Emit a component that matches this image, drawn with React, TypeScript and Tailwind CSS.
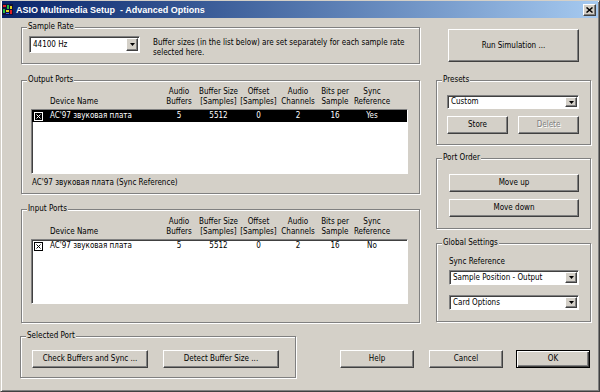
import type { ReactNode } from 'react'

// column widths for the port lists (audio buffers .. sync reference)
const COL_WIDTHS = ['w-[40px]', 'w-[39px]', 'w-[41px]', 'w-[38px]', 'w-[36px]', 'w-[38px]']

const HEADERS: [string, string][] = [
  ['Audio', 'Buffers'],
  ['Buffer Size', '[Samples]'],
  ['Offset', '[Samples]'],
  ['Audio', 'Channels'],
  ['Bits per', 'Sample'],
  ['Sync', 'Reference'],
]

type Port = {
  name: string
  values: string[]
}

const OUTPUT_PORTS: Port[] = [{ name: "AC'97 звуковая плата", values: ['5', '5512', '0', '2', '16', 'Yes'] }]
const INPUT_PORTS: Port[] = [{ name: "AC'97 звуковая плата", values: ['5', '5512', '0', '2', '16', 'No'] }]

const RAISED = 'border border-t-white border-l-white border-r-[#404040] border-b-[#404040] shadow-[inset_-1px_-1px_0_#808080]'
const SUNKEN = 'border border-t-[#808080] border-l-[#808080] border-r-white border-b-white shadow-[inset_1px_1px_0_#404040]'

function Group({ label, className, children }: { label: string; className: string; children?: ReactNode }) {
  return (
    <div className={`relative border border-[#808080] shadow-[inset_1px_1px_0_#fff,1px_1px_0_#fff] ${className}`}>
      <span className="absolute left-[5px] top-[-6px] bg-[#d4d0c8] px-[1px] leading-[10px]">{label}</span>
      {children}
    </div>
  )
}

function Button({ children, className, disabled, isDefault }: { children: ReactNode; className: string; disabled?: boolean; isDefault?: boolean }) {
  const frame = isDefault
    ? 'border border-black shadow-[inset_1px_1px_0_#fff,inset_-1px_-1px_0_#404040,inset_-2px_-2px_0_#808080]'
    : RAISED
  return (
    <div className={`flex items-center justify-center bg-[#d4d0c8] ${frame} ${className}`}>
      <span className={disabled ? 'text-[#808080] [text-shadow:1px_1px_0_#fff]' : ''}>{children}</span>
    </div>
  )
}

function Select({ value, className }: { value: string; className: string }) {
  return (
    <div className={`flex items-stretch bg-white p-[1px] ${SUNKEN} ${className}`}>
      <span className="flex flex-1 items-center pl-[2px] whitespace-nowrap">{value}</span>
      <span className={`flex w-[12px] items-center justify-center bg-[#d4d0c8] ${RAISED}`}>
        <svg width="5" height="3" viewBox="0 0 5 3">
          <path d="M0 0h5L2.5 3z" fill="#000" />
        </svg>
      </span>
    </div>
  )
}

function CheckMark() {
  return (
    <svg width="9" height="9" viewBox="0 0 9 9" className="shrink-0">
      <rect x="0.5" y="0.5" width="8" height="8" fill="none" stroke="currentColor" />
      <path d="M2.5 2.5l4 4M6.5 2.5l-4 4" stroke="currentColor" strokeWidth="1" />
    </svg>
  )
}

function PortList({ label, ports, selected, footer, className }: { label: string; ports: Port[]; selected?: boolean; footer?: string; className: string }) {
  return (
    <Group label={label} className={`h-[114px] pl-[9px] ${className}`}>
      {/* column headers */}
      <div className="flex items-end">
        <div className="w-[19px] shrink-0" />
        <div className="w-[109px] shrink-0">Device Name</div>
        {HEADERS.map((h, i) => (
          <div key={i} className={`${COL_WIDTHS[i]} shrink-0 text-center whitespace-nowrap`}>
            {h[0]}
            <br />
            {h[1]}
          </div>
        ))}
      </div>

      {/* list box */}
      <div className={`mt-[2px] h-[65px] w-[377px] bg-white ${SUNKEN}`}>
        {ports.map(p => (
          <div key={p.name} className={`flex h-[12px] items-center ${selected ? 'bg-black text-white' : 'text-black'}`}>
            <div className="flex w-[18px] shrink-0 pl-[2px]">
              <CheckMark />
            </div>
            <div className="w-[109px] shrink-0 whitespace-nowrap">{p.name}</div>
            {p.values.map((v, i) => (
              <div key={i} className={`${COL_WIDTHS[i]} shrink-0 text-center`}>{v}</div>
            ))}
          </div>
        ))}
      </div>

      {footer && <div className="mt-[4px] pl-[1px] whitespace-nowrap">{footer}</div>}
    </Group>
  )
}

function AsioIcon() {
  return (
    <svg width="11" height="11" viewBox="0 0 11 11" className="shrink-0">
      <rect width="11" height="11" fill="#10103a" />
      <rect x="1" y="1" width="3" height="2" fill="#e02020" />
      <rect x="5" y="1" width="2" height="4" fill="#20c040" />
      <rect x="8" y="2" width="2" height="3" fill="#e0d020" />
      <rect x="1" y="5" width="2" height="4" fill="#20c040" />
      <rect x="4" y="6" width="3" height="2" fill="#e0d020" />
      <rect x="8" y="6" width="2" height="4" fill="#e02020" />
      <rect x="4" y="9" width="3" height="1" fill="#3060ff" />
    </svg>
  )
}

export default function App() {
  return (
    <div className="flex h-[392px] w-[600px] flex-col border border-t-[#d4d0c8] border-l-[#d4d0c8] border-r-[#404040] border-b-[#404040] bg-[#d4d0c8] px-[1px] pb-[1px] font-['DejaVu_Sans_Condensed','Liberation_Sans',Arial,sans-serif] text-[8px] leading-[10px] text-black shadow-[inset_1px_1px_0_#fff,inset_-1px_-1px_0_#808080]">
      {/* Title bar */}
      <div className="flex h-[17px] shrink-0 items-center bg-gradient-to-r from-[#0a246a] to-[#a6caf0] pr-[2px]">
        <AsioIcon />
        <span className="ml-[3px] flex-1 font-['Liberation_Sans',Arial,sans-serif] text-[9px] font-bold whitespace-pre text-white">ASIO Multimedia Setup  - Advanced Options</span>
        <div className={`flex h-[12px] w-[13px] items-center justify-center bg-[#d4d0c8] ${RAISED}`}>
          <svg width="7" height="6" viewBox="0 0 7 6">
            <path d="M0.5 0.5l6 5M6.5 0.5l-6 5" stroke="#000" strokeWidth="1.5" />
          </svg>
        </div>
      </div>

      {/* Main area */}
      <div className="flex pl-[19px]">
        {/* Left column */}
        <div className="flex w-[399px] flex-col">
          <Group label="Sample Rate" className="mt-[9px] flex h-[37px] items-start pt-[8px] pl-[7px]">
            <Select value="44100 Hz" className="h-[17px] w-[111px]" />
            <div className="mt-[2px] ml-[13px] whitespace-nowrap">
              Buffer sizes (in the list below) are set separately for each sample rate
              <br />
              selected here.
            </div>
          </Group>

          <PortList
            label="Output Ports"
            ports={OUTPUT_PORTS}
            selected
            footer="AC'97 звуковая плата (Sync Reference)"
            className="mt-[16px] pt-[6px]"
          />

          <PortList label="Input Ports" ports={INPUT_PORTS} className="mt-[15px] pt-[7px]" />
        </div>

        {/* Right column */}
        <div className="ml-[16px] flex w-[155px] flex-col">
          <Button className="mt-[11px] ml-[12px] h-[33px] w-[131px]">Run Simulation ...</Button>

          <Group label="Presets" className="mt-[18px] h-[65px] pt-[14px] pl-[10px]">
            <Select value="Custom" className="h-[14px] w-[132px]" />
            <div className="mt-[7px] flex gap-[10px]">
              <Button className="h-[18px] w-[61px]">Store</Button>
              <Button className="h-[18px] w-[61px]" disabled>Delete</Button>
            </div>
          </Group>

          <Group label="Port Order" className="mt-[13px] h-[71px] pt-[15px] pl-[12px]">
            <Button className="h-[18px] w-[130px]">Move up</Button>
            <Button className="mt-[7px] h-[18px] w-[130px]">Move down</Button>
          </Group>

          <Group label="Global Settings" className="mt-[14px] h-[79px] pt-[13px] pl-[12px]">
            <div>Sync Reference</div>
            <Select value="Sample Position - Output" className="mt-[3px] h-[15px] w-[130px]" />
            <Select value="Card Options" className="mt-[10px] h-[15px] w-[130px]" />
          </Group>
        </div>
      </div>

      {/* Bottom row */}
      <div className="mt-[13px] flex items-start pl-[18px]">
        <Group label="Selected Port" className="flex h-[42px] w-[276px] gap-[15px] pt-[13px] pl-[11px]">
          <Button className="h-[18px] w-[116px]">Check Buffers and Sync ...</Button>
          <Button className="h-[18px] w-[116px]">Detect Buffer Size ...</Button>
        </Group>

        <Button className="mt-[14px] ml-[44px] h-[18px] w-[74px]">Help</Button>
        <Button className="mt-[14px] ml-[15px] h-[18px] w-[74px]">Cancel</Button>
        <Button className="mt-[14px] ml-[13px] h-[18px] w-[74px]" isDefault>OK</Button>
      </div>
    </div>
  )
}
